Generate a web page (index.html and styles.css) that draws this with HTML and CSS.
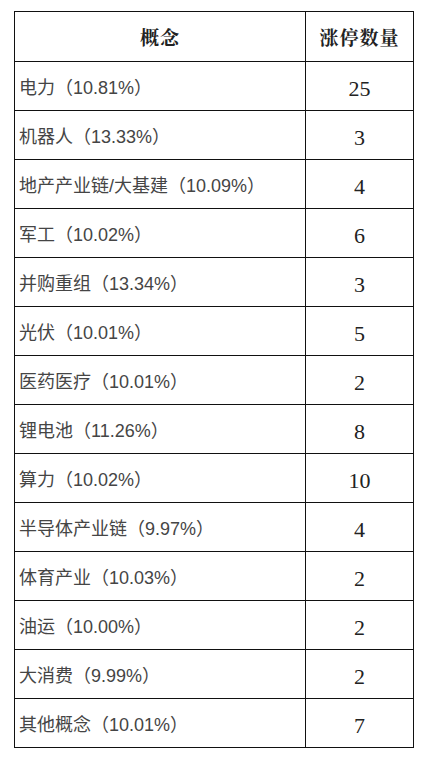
FILE: index.html
```
<!DOCTYPE html>
<html lang="zh-CN">
<head>
<meta charset="utf-8">
<title>概念涨停数量</title>
<link rel="stylesheet" href="styles.css">
</head>
<body>
<div class="wrap">
<table class="stats">
  <thead>
    <tr><th class="c-name">概念</th><th class="c-num">涨停数量</th></tr>
  </thead>
  <tbody>
    <tr><td class="c-name">电力（10.81%）</td><td class="c-num">25</td></tr>
    <tr><td class="c-name">机器人（13.33%）</td><td class="c-num">3</td></tr>
    <tr><td class="c-name">地产产业链/大基建（10.09%）</td><td class="c-num">4</td></tr>
    <tr><td class="c-name">军工（10.02%）</td><td class="c-num">6</td></tr>
    <tr><td class="c-name">并购重组（13.34%）</td><td class="c-num">3</td></tr>
    <tr><td class="c-name">光伏（10.01%）</td><td class="c-num">5</td></tr>
    <tr><td class="c-name">医药医疗（10.01%）</td><td class="c-num">2</td></tr>
    <tr><td class="c-name">锂电池（11.26%）</td><td class="c-num">8</td></tr>
    <tr><td class="c-name">算力（10.02%）</td><td class="c-num">10</td></tr>
    <tr><td class="c-name">半导体产业链（9.97%）</td><td class="c-num">4</td></tr>
    <tr><td class="c-name">体育产业（10.03%）</td><td class="c-num">2</td></tr>
    <tr><td class="c-name">油运（10.00%）</td><td class="c-num">2</td></tr>
    <tr><td class="c-name">大消费（9.99%）</td><td class="c-num">2</td></tr>
    <tr><td class="c-name">其他概念（10.01%）</td><td class="c-num">7</td></tr>
  </tbody>
</table>
</div>
</body>
</html>
```
FILE: styles.css
```
html, body {
  margin: 0;
  padding: 0;
  background: #ffffff;
}
.wrap {
  padding: 11px 0 0 14px;
}
.stats {
  border-collapse: separate;
  border-spacing: 0;
  table-layout: fixed;
  width: 400px;
}
.stats th,
.stats td {
  border-top: 1px solid #111;
  border-left: 1px solid #111;
  padding: 0;
  vertical-align: middle;
  white-space: nowrap;
}
.stats .c-num {
  border-right: 1px solid #111;
  width: 107px;
  text-align: center;
}
.stats .c-name {
  width: 290px;
}
.stats tbody tr:last-child td {
  border-bottom: 1px solid #111;
}
.stats th {
  height: 49px;
  font-family: "Noto Serif CJK SC", "Noto Sans CJK SC", serif;
  font-size: 19px;
  font-weight: 700;
  color: #222;
  letter-spacing: 1px;
  text-align: center;
}
.stats td {
  height: 48px;
}
.stats td.c-name {
  padding-left: 4px;
  font-family: "Liberation Sans", "Noto Sans CJK SC", sans-serif;
  font-size: 18px;
  color: #454545;
  text-align: left;
}
.stats td.c-num {
  height: 42px;
  padding-top: 6px;
  font-family: "Liberation Serif", serif;
  font-size: 22px;
  color: #222;
}
```
